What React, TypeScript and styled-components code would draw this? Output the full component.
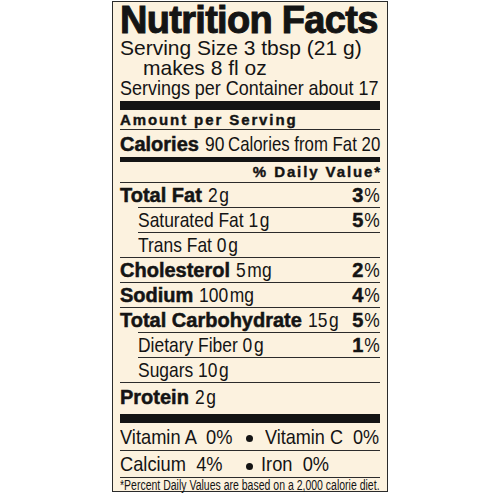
import React from 'react';
import styled, { createGlobalStyle } from 'styled-components';

const GlobalStyle = createGlobalStyle`
  html, body {
    margin: 0;
    padding: 0;
    background: #ffffff;
  }
  body {
    font-family: "Liberation Sans", Arial, sans-serif;
    color: #141414;
  }
`;

const Page = styled.div`
  width: 500px;
  height: 500px;
  display: flex;
  justify-content: center;
  align-items: flex-start;
  padding-top: 1px;
  box-sizing: border-box;
  overflow: hidden;
`;

const Label = styled.div`
  width: 276px;
  box-sizing: border-box;
  border: 1px solid #2b2b2b;
  background: #fcf2df;
  padding: 0 7px;
  display: flex;
  flex-direction: column;
`;

const Title = styled.div`
  height: 36px;
  font-size: 38px;
  line-height: 36px;
  font-weight: 700;
  letter-spacing: -0.7px;
  white-space: nowrap;
  -webkit-text-stroke: 1px #141414;
`;

// the label's regular face is a condensed grotesk: squeeze Liberation Sans
const Cond = styled.span<{ $s?: number; $origin?: string; $size?: number }>`
  display: inline-block;
  font-family: "Liberation Sans", Arial, sans-serif;
  font-size: ${(p) => p.$size || 21}px;
  font-weight: 400;
  white-space: pre;
  transform: scaleX(${(p) => p.$s || 0.83});
  transform-origin: ${(p) => p.$origin || 'left'} center;
  -webkit-text-stroke: 0;
`;

const Plain = styled.div<{ $indent?: number }>`
  height: 20px;
  line-height: 20px;
  font-size: 21px;
  white-space: nowrap;
  padding-left: ${(p) => p.$indent || 0}px;
`;

const Bar = styled.div<{ $h: number; $top?: number }>`
  height: ${(p) => p.$h}px;
  margin-top: ${(p) => p.$top || 0}px;
  background: #141414;
`;

const SmallHead = styled.div<{ $h: number; $right?: boolean }>`
  height: ${(p) => p.$h}px;
  line-height: ${(p) => p.$h}px;
  font-size: 15px;
  font-weight: 700;
  letter-spacing: 1.9px;
  white-space: nowrap;
  text-align: ${(p) => (p.$right ? 'right' : 'left')};
  margin-right: ${(p) => (p.$right ? -2 : 0)}px;
  -webkit-text-stroke: 0.4px #141414;
`;

const Row = styled.div<{ $h?: number; $indent?: boolean; $line?: boolean }>`
  height: ${(p) => p.$h || 24}px;
  line-height: ${(p) => p.$h || 24}px;
  margin-left: ${(p) => (p.$indent ? 18 : 0)}px;
  border-top: ${(p) => (p.$line ? '1px solid #2b2b2b' : 'none')};
  display: flex;
  align-items: baseline;
  justify-content: space-between;
  white-space: nowrap;
`;

const RightAnchor = styled.span`
  display: flex;
  justify-content: flex-end;
  width: 0;
  margin-left: auto;
`;

const Name = styled.span`
  font-size: 20px;
  font-weight: 700;
  margin-right: 6px;
  -webkit-text-stroke: 0.5px #141414;
`;

const Unit = styled.span`
  margin-left: 2px;
`;

const Percent = styled.span`
  font-size: 20px;
  font-weight: 700;
  -webkit-text-stroke: 0.5px #141414;
`;

const PctSign = styled(Cond)`
  margin-left: -2px;
`;

const VitaminRow = styled.div<{ $h: number }>`
  height: ${(p) => p.$h}px;
  line-height: ${(p) => p.$h}px;
  border-bottom: 1px solid #2b2b2b;
  display: grid;
  grid-template-columns: 124px 10px 1fr;
  align-items: baseline;
  white-space: pre;
`;

const Dot = styled.span`
  align-self: center;
  display: flex;
  justify-content: center;
  padding-top: 2px;
  &::before {
    content: '';
    width: 7px;
    height: 7px;
    border-radius: 50%;
    background: #141414;
  }
`;

const VitRight = styled.span<{ $pad: number }>`
  padding-left: ${(p) => p.$pad}px;
`;

const Footnote = styled.div`
  height: 13px;
  line-height: 13px;
  white-space: nowrap;
`;

type Nutrient = {
  name: string;
  qty: string;
  unit: string;
  dv?: string;
  bold?: boolean;
  indent?: boolean;
};

const nutrients: Nutrient[] = [
  { name: 'Total Fat', qty: '2', unit: 'g', dv: '3', bold: true },
  { name: 'Saturated Fat', qty: '1', unit: 'g', dv: '5', indent: true },
  { name: 'Trans Fat', qty: '0', unit: 'g', indent: true },
  { name: 'Cholesterol', qty: '5', unit: 'mg', dv: '2', bold: true },
  { name: 'Sodium', qty: '100', unit: 'mg', dv: '4', bold: true },
  { name: 'Total Carbohydrate', qty: '15', unit: 'g', dv: '5', bold: true },
  { name: 'Dietary Fiber', qty: '0', unit: 'g', dv: '1', indent: true },
  { name: 'Sugars', qty: '10', unit: 'g', indent: true },
  { name: 'Protein', qty: '2', unit: 'g', bold: true },
];

const NutrientRow: React.FC<{ n: Nutrient; h?: number }> = ({ n, h }) => (
  <Row $line $indent={n.indent} $h={h}>
    <span>
      {n.bold && <Name>{n.name}</Name>}
      <Cond>
        {n.bold ? '' : `${n.name} `}
        {n.qty}
        <Unit>{n.unit}</Unit>
      </Cond>
    </span>
    {n.dv && (
      <span>
        <Percent>{n.dv}</Percent>
        <PctSign $origin="right">%</PctSign>
      </span>
    )}
  </Row>
);

export default function App() {
  return (
    <>
      <GlobalStyle />
      <Page>
        <Label>
          <Title>Nutrition Facts</Title>
          <Plain>Serving Size 3 tbsp (21 g)</Plain>
          <Plain $indent={23}>makes 8 fl oz</Plain>
          <Plain>
            <Cond $s={0.855}>Servings per Container about 17</Cond>
          </Plain>
          <Bar $h={9} $top={3} />
          <SmallHead $h={19}>Amount per Serving</SmallHead>
          <Row $line $h={27}>
            <span>
              <Name>Calories</Name>
              <Cond>90</Cond>
            </span>
            <RightAnchor>
              <Cond $s={0.8} $origin="right">
                Calories from Fat 20
              </Cond>
            </RightAnchor>
          </Row>
          <Bar $h={5} />
          <SmallHead $h={20} $right>
            % Daily Value*
          </SmallHead>
          {nutrients.map((n) => (
            <NutrientRow key={n.name} n={n} h={n.name === 'Protein' ? 27 : 24} />
          ))}
          <Bar $h={9} $top={4} />
          <VitaminRow $h={27}>
            <Cond $s={0.87}>{'Vitamin A  0%'}</Cond>
            <Dot />
            <VitRight $pad={11}>
              <Cond $s={0.86}>{'Vitamin C  0%'}</Cond>
            </VitRight>
          </VitaminRow>
          <VitaminRow $h={26}>
            <Cond $s={0.87}>{'Calcium  4%'}</Cond>
            <Dot />
            <VitRight $pad={7}>
              <Cond $s={0.87}>{'Iron  0%'}</Cond>
            </VitRight>
          </VitaminRow>
          <Footnote>
            <Cond $size={14} $s={0.75}>
              *Percent Daily Values are based on a 2,000 calorie diet.
            </Cond>
          </Footnote>
        </Label>
      </Page>
    </>
  );
}
